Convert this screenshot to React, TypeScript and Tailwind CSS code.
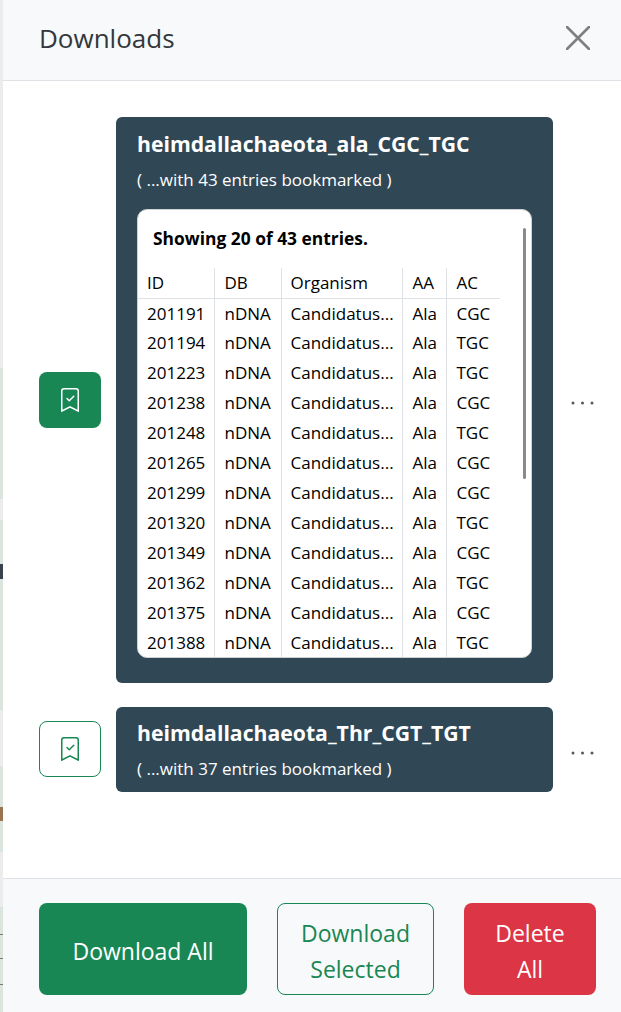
import React from 'react';

const rows = [
  ['201191', 'CGC'], ['201194', 'TGC'], ['201223', 'TGC'], ['201238', 'CGC'],
  ['201248', 'TGC'], ['201265', 'CGC'], ['201299', 'CGC'], ['201320', 'TGC'],
  ['201349', 'CGC'], ['201362', 'TGC'], ['201375', 'CGC'], ['201388', 'TGC'],
];

const font = "font-['Open_Sans','Noto_Sans',sans-serif]";

const BookmarkCheck: React.FC<{ className?: string }> = ({ className }) => (
  <svg viewBox="0 0 16 16" fill="currentColor" className={className}>
    <path fillRule="evenodd" d="M10.854 5.146a.5.5 0 0 1 0 .708l-3 3a.5.5 0 0 1-.708 0l-1.5-1.5a.5.5 0 1 1 .708-.708L7.5 7.793l2.646-2.647a.5.5 0 0 1 .708 0z" />
    <path d="M2 2a2 2 0 0 1 2-2h8a2 2 0 0 1 2 2v13.5a.5.5 0 0 1-.777.416L8 13.101l-5.223 2.815A.5.5 0 0 1 2 15.5V2zm2-1a1 1 0 0 0-1 1v12.566l4.723-2.482a.5.5 0 0 1 .554 0L13 14.566V2a1 1 0 0 0-1-1H4z" />
  </svg>
);

const Dots = () => (
  <svg viewBox="0 0 24 6" fill="#4f5962" className="w-6 h-[6px]">
    <circle cx="3" cy="3" r="1.5" />
    <circle cx="12.5" cy="3" r="1.5" />
    <circle cx="22" cy="3" r="1.5" />
  </svg>
);

// what shows of the page behind the panel
const strip = [
  { h: 'h-[368px]', c: 'bg-[#ececec]' },
  { h: 'h-[131px]', c: 'bg-[#dbe5de]' },
  { h: 'h-[21px]', c: 'bg-[#ececec]' },
  { h: 'h-[45px]', c: 'bg-[#dbe5de]' },
  { h: 'h-[15px]', c: 'bg-[#39424e]' },
  { h: 'h-[131px]', c: 'bg-[#dbe5de]' },
  { h: 'h-[56px]', c: 'bg-[#ececec]' },
  { h: 'h-[41px]', c: 'bg-[#dbe5de]' },
  { h: 'h-[14px]', c: 'bg-[#9a7350]' },
  { h: 'h-[31px]', c: 'bg-[#dbe5de]' },
  { h: 'h-[55px]', c: 'bg-[#ececec]' },
  { h: 'h-[27px]', c: 'bg-[#dbe5de]' },
  { h: 'h-px', c: 'bg-[#777777]' },
  { h: 'h-[23px]', c: 'bg-[#dbe5de]' },
  { h: 'h-px', c: 'bg-[#777777]' },
  { h: 'h-[25px]', c: 'bg-[#dbe5de]' },
  { h: 'h-px', c: 'bg-[#777777]' },
  { h: 'h-[27px]', c: 'bg-[#dbe5de]' },
];

const thClass = 'h-[30px] font-normal text-left pr-1 border-b border-r border-[#dee2e6] last:border-r-0';
const tdClass = 'h-[30px] pr-1 border-r border-[#dee2e6] last:border-r-0 whitespace-nowrap';

const App: React.FC = () => {
  return (
    <div className={`${font} w-[621px] h-[1012px] flex overflow-hidden`}>
      <div className="w-[3px] shrink-0 flex flex-col">
        {strip.map((s, i) => (
          <div key={i} className={`${s.h} ${s.c}`} />
        ))}
      </div>
      <div className="flex-1 flex flex-col bg-white">
        <div className="h-[81px] shrink-0 bg-[#f8f9fa] border-b border-[#dee2e6] flex items-center justify-between pl-[36px] pr-[31px]">
          <h1 className="text-[26px] font-medium text-[#33383d] mb-[3px]">Downloads</h1>
          <svg viewBox="0 0 24 24" className="w-[24px] h-[24px] mb-1" stroke="#7f7f7f" strokeWidth="2.6" strokeLinecap="round">
            <path d="M1 1 L23 23 M23 1 L1 23" />
          </svg>
        </div>

        <div className="flex-1 pt-[36px] pl-[36px] pr-[26px] flex flex-col gap-6">
          <div className="flex items-center">
            <div className="w-[62px] h-[56px] rounded-lg bg-[#198754] text-white flex items-center justify-center shrink-0">
              <BookmarkCheck className="w-6 h-6" />
            </div>
            <div className="ml-[15px] w-[437px] h-[566px] rounded-md bg-[#304756] px-[21px] pt-[12px] text-white">
              <div className="text-[21.2px] font-bold leading-[30px]">heimdallachaeota_ala_CGC_TGC</div>
              <div className="text-[17px] leading-6 mt-[9px]">( ...with 43 entries bookmarked )</div>
              <div className="relative mt-[17px] h-[449px] rounded-[10px] bg-white border border-[#d0d0d0] overflow-hidden text-black">
                <div className="pl-[15px] pt-[16px] text-[17.4px] font-bold leading-6">Showing 20 of 43 entries.</div>
                <table className="mt-[18px] w-[362px] border-collapse text-[17px] table-fixed">
                  <thead>
                    <tr>
                      <th className={`${thClass} w-[76px] pl-[9px]`}>ID</th>
                      <th className={`${thClass} w-[67px] pl-[10px]`}>DB</th>
                      <th className={`${thClass} w-[121px] pl-[9px]`}>Organism</th>
                      <th className={`${thClass} w-[44px] pl-[10px]`}>AA</th>
                      <th className={`${thClass} w-[54px] pl-[10px]`}>AC</th>
                    </tr>
                  </thead>
                  <tbody>
                    {rows.map(([id, ac]) => (
                      <tr key={id}>
                        <td className={`${tdClass} pl-[9px]`}>{id}</td>
                        <td className={`${tdClass} pl-[10px]`}>nDNA</td>
                        <td className={`${tdClass} pl-[9px]`}>Candidatus...</td>
                        <td className={`${tdClass} pl-[10px]`}>Ala</td>
                        <td className={`${tdClass} pl-[10px]`}>{ac}</td>
                      </tr>
                    ))}
                  </tbody>
                </table>
                <div className="absolute right-[5px] top-[18px] w-[3px] h-[251px] rounded-full bg-[#8a8a8a]" />
              </div>
            </div>
            <div className="ml-[17px] mt-[6px]"><Dots /></div>
          </div>

          <div className="flex items-center">
            <div className="w-[62px] h-[56px] mb-[2px] rounded-lg border border-[#198754] text-[#198754] flex items-center justify-center shrink-0">
              <BookmarkCheck className="w-6 h-6" />
            </div>
            <div className="ml-[15px] w-[437px] h-[85px] rounded-md bg-[#304756] px-[21px] pt-[11px] text-white">
              <div className="text-[21.2px] font-bold leading-[30px]">heimdallachaeota_Thr_CGT_TGT</div>
              <div className="text-[17px] leading-6 mt-[9px]">( ...with 37 entries bookmarked )</div>
            </div>
            <div className="ml-[17px] mt-[6px]"><Dots /></div>
          </div>
        </div>

        <div className="h-[134px] shrink-0 bg-[#f8f9fa] border-t border-[#dee2e6] flex items-start pt-[24px] pl-[36px] text-[23px] leading-9">
          <button className="w-[208px] h-[92px] pt-1 rounded-lg bg-[#198754] text-white">Download All</button>
          <button className="ml-[30px] w-[157px] h-[92px] pt-1 rounded-lg border border-[#198754] text-[#198754]">Download Selected</button>
          <button className="ml-[30px] w-[132px] h-[92px] pt-1 rounded-lg bg-[#dc3545] text-white px-6">Delete All</button>
        </div>
      </div>
    </div>
  );
};

export default App;
